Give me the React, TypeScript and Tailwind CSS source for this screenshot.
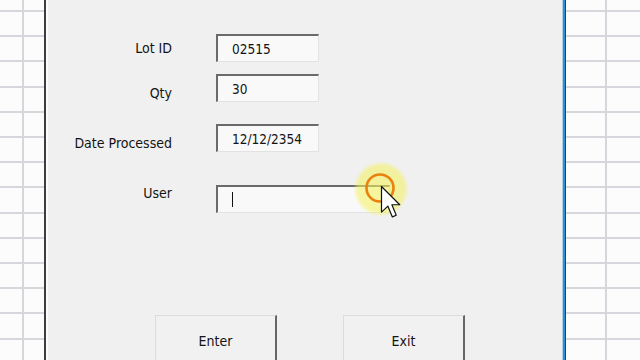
import React from "react";

const gridBg =
  "bg-[#fcfcfd] bg-[repeating-linear-gradient(to_bottom,transparent_0px,transparent_10px,#d6d6dc_10px,#d6d6dc_12px,transparent_12px,transparent_25.2px)]";

function TextBox({ value, wide, caret }: { value?: string; wide?: boolean; caret?: boolean }) {
  return (
    <div
      className={`${wide ? "w-[174px]" : "w-[103px]"} h-[28px] flex items-center pl-[14px] bg-[#f9f9f9] border-t-2 border-l-2 border-t-[#6a6a6a] border-l-[#6a6a6a] border-r border-b border-r-[#e2e2e2] border-b-[#e2e2e2] text-[13.5px] leading-[18px] text-[#141414]`}
    >
      {value}
      {caret && <span className="block w-px h-[15px] bg-[#111]" />}
    </div>
  );
}

function Button({ label }: { label: string }) {
  return (
    <div className="w-[122px] h-[60px] bg-[#f1f1f1] border-t border-l border-t-[#dcdcdc] border-l-[#dcdcdc] border-r-2 border-r-[#666] flex justify-center pt-[16px] text-[14px] leading-[18px] text-[#141414]">
      {label}
    </div>
  );
}

const labelCls = "w-[124px] shrink-0 text-right text-[14px] leading-[18px] text-[#141414]";

export default function App() {
  return (
    <div
      className="relative w-[640px] h-[360px] overflow-hidden flex bg-[#f0f0f0]"
      style={{ fontFamily: '"DejaVu Sans Condensed", Tahoma, "DejaVu Sans", sans-serif' }}
    >
      {/* left spreadsheet */}
      <div className={`w-[44px] h-full flex ${gridBg}`}>
        <div className="w-[24px] h-full border-r-2 border-r-[#d6d6dc]" />
      </div>
      <div className="w-[2px] h-full bg-[#3d3d3d]" />
      <div className="w-[2px] h-full bg-[#fbfbfb]" />

      {/* form panel */}
      <div className="w-[514px] h-full bg-[#f0f0f0] flex flex-col pt-[34px]">
        <div className="flex items-start h-[28px]">
          <div className={`${labelCls} pt-[5px]`}>Lot ID</div>
          <div className="ml-[44px]">
            <TextBox value="02515" />
          </div>
        </div>
        <div className="flex items-start h-[28px] mt-[12px]">
          <div className={`${labelCls} pt-[10px]`}>Qty</div>
          <div className="ml-[44px]">
            <TextBox value="30" />
          </div>
        </div>
        <div className="flex items-start h-[28px] mt-[22px]">
          <div className={`${labelCls} pt-[10px]`}>Date Processed</div>
          <div className="ml-[44px]">
            <TextBox value="12/12/2354" />
          </div>
        </div>
        <div className="flex items-start h-[28px] mt-[33px]">
          <div className={`${labelCls} -mt-[1px]`}>User</div>
          <div className="ml-[44px]">
            <TextBox wide caret />
          </div>
        </div>
        <div className="flex mt-[102px] ml-[107px] gap-[66px]">
          <Button label="Enter" />
          <Button label="Exit" />
        </div>
      </div>

      {/* right border of the form window */}
      <div className="w-px h-full bg-[#a9cfe9]" />
      <div className="w-[2px] h-full bg-[#2f8fd3]" />
      <div className="w-px h-full bg-[#1c4764]" />

      {/* right spreadsheet */}
      <div className={`flex-1 h-full flex ${gridBg}`}>
        <div className="w-[41px] h-full border-r-2 border-r-[#d6d6dc]" />
      </div>

      {/* mouse highlight + pointer overlay */}
      <svg className="absolute left-[350px] top-[160px]" width="64" height="66" viewBox="0 0 64 66">
        <defs>
          <radialGradient id="hl" cx="50%" cy="50%" r="50%">
            <stop offset="0%" stopColor="#f4f15c" stopOpacity="0.6" />
            <stop offset="82%" stopColor="#f4f15c" stopOpacity="0.55" />
            <stop offset="100%" stopColor="#f4f15c" stopOpacity="0" />
          </radialGradient>
        </defs>
        <circle cx="31" cy="29" r="28" fill="url(#hl)" />
        <circle cx="30" cy="28" r="13.5" fill="none" stroke="#e8820c" strokeWidth="2.6" />
        <g transform="translate(31.5 26.5) scale(1.6)">
          <path
            d="M0 0 L0 16 L4 12.3 L6.8 19 L9.2 18 L6.5 11.4 L11.4 11.4 Z"
            fill="#ffffff"
            stroke="#111"
            strokeWidth="0.75"
            strokeLinejoin="round"
          />
        </g>
      </svg>
    </div>
  );
}
